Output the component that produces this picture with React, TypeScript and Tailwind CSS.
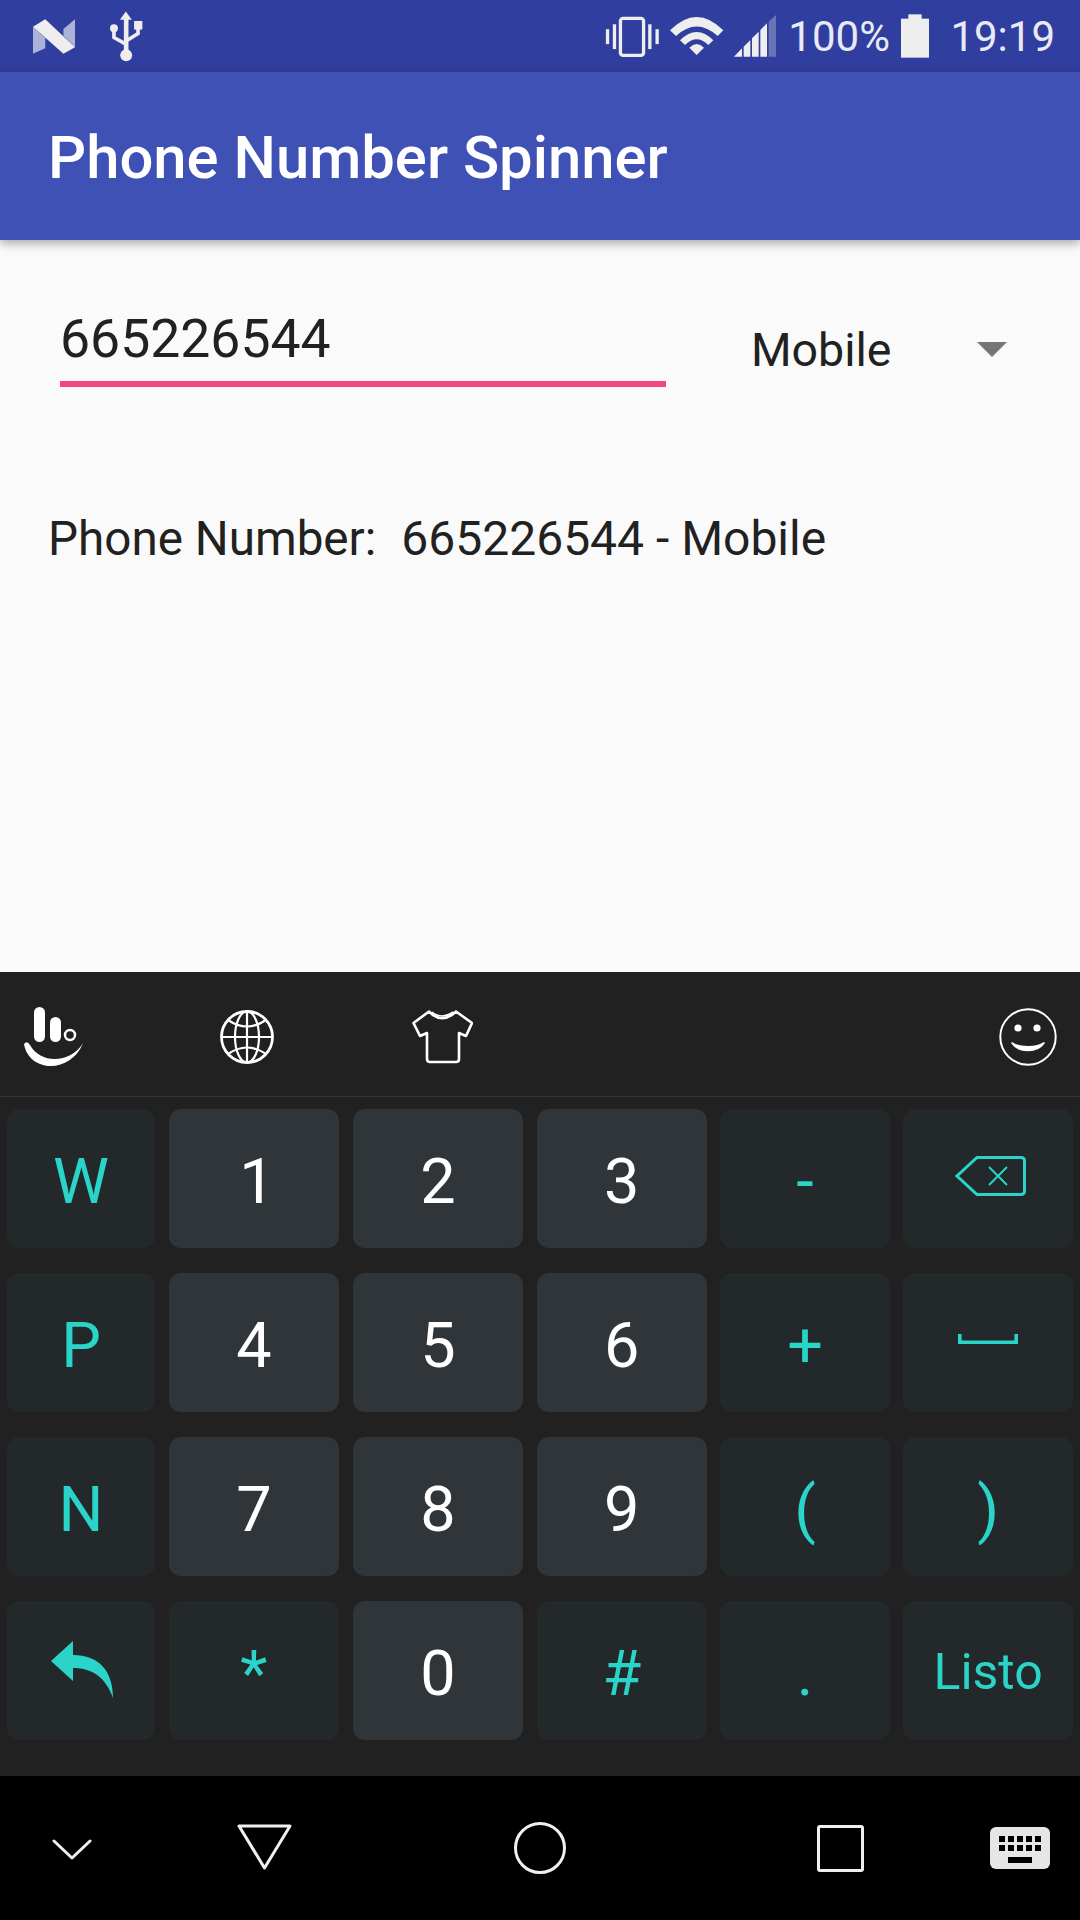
import React from "react";

type KeyData = {
    label?: string
    icon?: React.ReactNode
    light?: boolean
    small?: boolean
    shift?: boolean
}

const NLogo = () => (
    <svg width="42" height="35" viewBox="98 55 127 105" className="ml-[33px]">
        <polygon points="98,78 135,112 135,143 98,160" fill="#ffffff" opacity="0.6" />
        <polygon points="190,85 225,55 225,140 190,105" fill="#ffffff" opacity="0.6" />
        <polygon points="98,78 135,55 225,140 190,160" fill="#eeeeee" />
    </svg>
)

const UsbIcon = () => (
    <svg width="33" height="51" viewBox="330 33 100 152" className="ml-[35px]">
        <polygon points="378,33 360,58 396,58" fill="#eeeeee" />
        <rect x="372" y="55" width="14" height="105" fill="#eeeeee" />
        <circle cx="379" cy="166" r="18" fill="#eeeeee" />
        <circle cx="342" cy="84" r="12" fill="#eeeeee" />
        <rect x="403" y="62" width="25" height="26" fill="#eeeeee" />
        <path d="M342 90 V112 L378 132 M415 85 V100 L380 122" fill="none" stroke="#eeeeee" strokeWidth="11" />
    </svg>
)

const VibrateIcon = () => (
    <svg width="54" height="41" viewBox="80 45 162 124">
        <rect x="126" y="52" width="70" height="112" rx="8" fill="none" stroke="#eeeeee" strokeWidth="10" />
        <rect x="82" y="85" width="10" height="45" fill="#eeeeee" />
        <rect x="103" y="70" width="10" height="75" fill="#eeeeee" />
        <rect x="210" y="70" width="10" height="75" fill="#eeeeee" />
        <rect x="232" y="85" width="10" height="45" fill="#eeeeee" />
    </svg>
)

const WifiIcon = () => (
    <svg width="54" height="38" viewBox="272 48 162 114" className="ml-[11px]">
        <path d="M272 88 Q352 8 432 88 L415 105 Q352 48 290 105 Z" fill="#eeeeee" />
        <path d="M302 118 Q352 68 402 118 L387 132 Q352 98 317 132 Z" fill="#eeeeee" />
        <path d="M330 140 Q352 118 374 140 L352 162 Z" fill="#eeeeee" />
    </svg>
)

const SignalIcon = () => (
    <svg width="42" height="42" viewBox="468 45 126 126" className="ml-[10px]">
        <polygon points="468,170 492,145 492,170" fill="#eeeeee" />
        <polygon points="497,140 517,120 517,170 497,170" fill="#eeeeee" />
        <polygon points="522,115 542,95 542,170 522,170" fill="#eeeeee" />
        <polygon points="547,90 567,70 567,170 547,170" fill="#eeeeee" />
        <polygon points="572,65 594,45 594,170 572,170" fill="#eeeeee" opacity="0.3" />
    </svg>
)

const BatteryIcon = () => (
    <svg width="28" height="44" viewBox="960 42 84 130" className="ml-[11px]">
        <rect x="982" y="42" width="40" height="15" fill="#eeeeee" />
        <rect x="960" y="55" width="84" height="117" fill="#eeeeee" />
    </svg>
)

const StatusBar = () => (
    <div className="h-[72px] bg-[#303f9f] flex items-center text-[#e8eaf6] text-[42px]">
        <NLogo />
        <UsbIcon />
        <div className="ml-auto mr-[25px] flex items-center">
            <VibrateIcon />
            <WifiIcon />
            <SignalIcon />
            <span className="ml-[12px]">100%</span>
            <BatteryIcon />
            <span className="ml-[21.5px]">19:19</span>
        </div>
    </div>
)

const TypingLogo = () => (
    <svg width="60" height="60" viewBox="0 0 60 60" className="ml-[23px]" fill="none">
        <rect x="11" y="0" width="11" height="35" rx="5.5" fill="#ffffff" />
        <rect x="27" y="10" width="11" height="25" rx="5.5" fill="#ffffff" />
        <circle cx="47" cy="28" r="5" stroke="#ffffff" strokeWidth="2.5" />
        <path d="M1 37 C6 66 48 67 60 36 C48 56 18 58 7 38 Q4 33 1 37 Z" fill="#ffffff" />
    </svg>
)

const GlobeIcon = () => (
    <svg width="54" height="54" viewBox="0 0 54 54" className="ml-[137px]" fill="none" stroke="#ffffff" strokeWidth="2.2">
        <circle cx="27" cy="27" r="25.5" strokeWidth="2.8" />
        <ellipse cx="27" cy="27" rx="12" ry="25.5" />
        <path d="M27 1.5 V52.5 M1.5 27 H52.5" />
        <path d="M8 10 Q27 23 46 10 M8 44 Q27 31 46 44" />
    </svg>
)

const ShirtIcon = () => (
    <svg width="61" height="54" viewBox="0 0 61 54" className="ml-[138px]" fill="none" stroke="#ffffff" strokeWidth="2.6" strokeLinejoin="round">
        <path d="M17 1.5 Q30 15 44 1.5 L60 13 L54 26 L47 23 V49 Q47 52 44 52 H18 Q15 52 15 49 V23 L8 26 L1.5 13 Z" />
        <path d="M20 2 Q30 10 41 2" strokeWidth="1.6" />
    </svg>
)

const SmileyIcon = () => (
    <svg width="58" height="58" viewBox="0 0 58 58" className="ml-auto mr-[23px]" fill="none">
        <circle cx="29" cy="29" r="27.7" stroke="#ffffff" strokeWidth="2" />
        <circle cx="19" cy="20" r="3.6" fill="#ffffff" />
        <circle cx="38" cy="20" r="3.6" fill="#ffffff" />
        <path d="M13 35 C20 45 38 45 45 35 C38 40 20 40 13 35 Z" fill="#ffffff" stroke="#ffffff" strokeWidth="1.6" strokeLinejoin="round" />
    </svg>
)

const BackspaceIcon = () => (
    <svg width="71" height="40" viewBox="0 0 71 40" fill="none" stroke="#2ad4c8" className="ml-[4px] mb-[6px]">
        <path d="M22 1.5 H66 Q69.5 1.5 69.5 5 V35 Q69.5 38.5 66 38.5 H22 L2 20 Z" strokeWidth="3" />
        <path d="M34 11 L52 29 M52 11 L34 29" strokeWidth="2" />
    </svg>
)

const SpaceIcon = () => (
    <svg width="60" height="10" viewBox="0 0 60 10" fill="none" stroke="#2ad4c8" strokeWidth="3.6" className="mb-[8px]">
        <path d="M1.8 0 V8.2 H58.2 V0" />
    </svg>
)

const ReplyIcon = () => (
    <svg width="62" height="57" viewBox="0 0 62 57" className="mb-[2px] ml-[2px]">
        <path d="M22 0 L0 20 L22 40 V27 C42 27 55 37 62 57 C62 30 48 14 22 14 Z" fill="#2ad4c8" />
    </svg>
)

const rows: KeyData[][] = [
    [{label: "W"}, {label: "1", light: true, shift: true}, {label: "2", light: true}, {label: "3", light: true}, {label: "-"}, {icon: <BackspaceIcon />}],
    [{label: "P"}, {label: "4", light: true}, {label: "5", light: true}, {label: "6", light: true}, {label: "+"}, {icon: <SpaceIcon />}],
    [{label: "N"}, {label: "7", light: true}, {label: "8", light: true}, {label: "9", light: true}, {label: "("}, {label: ")"}],
    [{icon: <ReplyIcon />}, {label: "*"}, {label: "0", light: true}, {label: "#"}, {label: "."}, {label: "Listo", small: true}],
]

const Key: React.FC<{data: KeyData}> = ({data}) => {
    const {label, icon, light, small, shift} = data
    return (
        <div className={`h-[139px] rounded-[12px] flex items-center justify-center ${light ? "bg-[#2f3538] text-white" : "bg-[#23282b] text-[#2ad4c8]"} ${small ? "text-[50px]" : "text-[63px]"} ${shift ? "pl-[6px]" : ""}`}>
            {icon ?? <span className={small ? "mt-[4px]" : "mt-[7px]"}>{label}</span>}
        </div>
    )
}

const Keyboard = () => (
    <div className="h-[804px] bg-[#212121] flex flex-col">
        <div className="h-[124px] flex items-center border-b border-[#363636] box-content pt-0">
            <div className="flex items-center w-full mt-[5px]">
                <TypingLogo />
                <GlobeIcon />
                <ShirtIcon />
                <SmileyIcon />
            </div>
        </div>
        <div className="mt-[12px] mx-[7px] grid grid-cols-[148px_170.5px_170.5px_170px_169.3px_169.7px] gap-x-[13.6px] gap-y-[25px]">
            {rows.flat().map((item, index) => (
                <Key key={index} data={item} />
            ))}
        </div>
    </div>
)

const NavBar = () => (
    <div className="h-[144px] bg-black flex items-center">
        <svg width="40" height="21" viewBox="0 0 40 21" fill="none" stroke="#f0f0f0" strokeWidth="3" strokeLinecap="round" strokeLinejoin="round" className="ml-[52px] mt-[2px]">
            <path d="M2 2 L20 19 L38 2" />
        </svg>
        <svg width="55" height="46" viewBox="0 0 55 46" fill="none" stroke="#f0f0f0" strokeWidth="3" strokeLinejoin="round" className="ml-[145px] mb-[2px]">
            <path d="M2 2 H53 L27.5 44 Z" />
        </svg>
        <div className="ml-[222px] w-[52px] h-[52px] rounded-full border-[3px] border-[#f0f0f0]" />
        <div className="ml-[251px] w-[47px] h-[47px] rounded-[3px] border-[3px] border-[#f0f0f0]" />
        <svg width="60" height="42" viewBox="0 0 60 42" className="ml-[126px]">
            <rect width="60" height="42" rx="6" fill="#e6e6e6" />
            <g fill="#000000">
                <rect x="9" y="9" width="6" height="6" /><rect x="18" y="9" width="6" height="6" /><rect x="27" y="9" width="6" height="6" /><rect x="36" y="9" width="6" height="6" /><rect x="45" y="9" width="6" height="6" />
                <rect x="9" y="18" width="6" height="6" /><rect x="18" y="18" width="6" height="6" /><rect x="27" y="18" width="6" height="6" /><rect x="36" y="18" width="6" height="6" /><rect x="45" y="18" width="6" height="6" />
                <rect x="18" y="30" width="24" height="6" />
            </g>
        </svg>
    </div>
)

export default function App() {
    return (
        <div className="w-[1080px] h-[1920px] flex flex-col bg-[#fafafa] font-['Roboto',sans-serif] overflow-hidden">
            <StatusBar />
            <div className="h-[168px] bg-[#3f51b5] flex items-center pl-[48px] pt-[5px] text-white text-[59.8px] font-medium shadow-[0_3px_10px_rgba(0,0,0,0.35)] relative">
                Phone Number Spinner
            </div>
            <div className="h-[732px] text-[#212121]">
                <div className="flex pt-[66px]">
                    <div className="ml-[60px] w-[606px] border-b-[6px] border-[#f4457f] h-[81px] text-[53.5px] leading-[65px]">
                        665226544
                    </div>
                    <div className="ml-[85px] w-[145px] text-[46.5px] leading-[54px] mt-[17px]">Mobile</div>
                    <div className="ml-[81px] mt-[36px] w-0 h-0 border-l-[15px] border-r-[15px] border-t-[15px] border-l-transparent border-r-transparent border-t-[#757575]" />
                </div>
                <div className="flex mt-[124px] ml-[48px] leading-[56px]">
                    <span className="text-[47.6px]">Phone Number:</span>
                    <span className="ml-[25px] text-[48px]">665226544 - Mobile</span>
                </div>
            </div>
            <Keyboard />
            <NavBar />
        </div>
    )
}
